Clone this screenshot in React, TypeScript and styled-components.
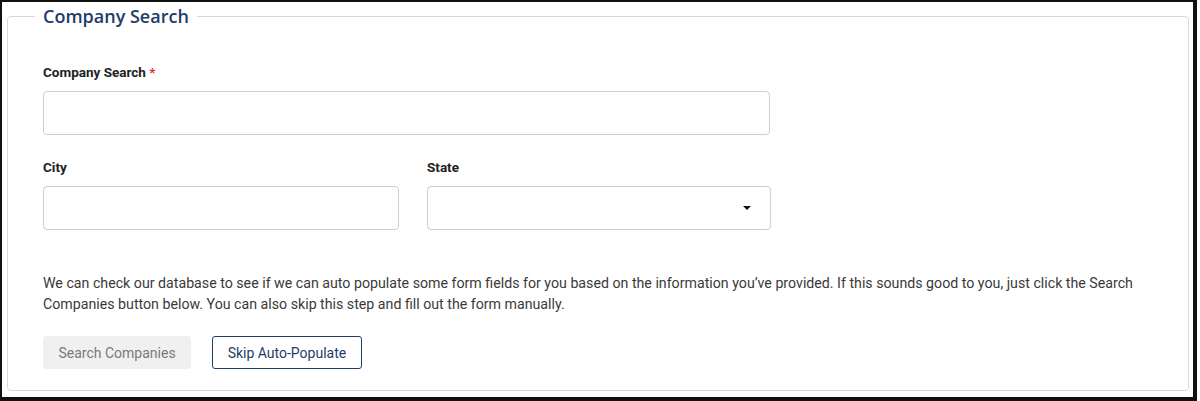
import styled, { createGlobalStyle } from "styled-components";

const navy = "#1e3c68";
const line = "#d3d9e0";

const GlobalStyle = createGlobalStyle`
  html, body {
    margin: 0;
    padding: 0;
    background: #fff;
  }
  body {
    font-family: Roboto, "Liberation Sans", sans-serif;
  }
`;

const Frame = styled.div`
  box-sizing: border-box;
  width: 1197px;
  height: 401px;
  border-style: solid;
  border-color: #111;
  border-width: 2px 4px 4px 2px;
  display: flex;
  flex-direction: column;
  background: #fff;
`;

const Fieldset = styled.fieldset`
  flex: 1;
  margin: 3px 4px 6px 5px;
  padding: 35px 35px 0 35px;
  border: 1px solid ${line};
  border-radius: 4px;
  min-width: 0;
`;

const Legend = styled.legend`
  margin-left: -8px;
  padding: 0 8px;
  font-family: "Open Sans", sans-serif;
  font-weight: 600;
  font-size: 18px;
  line-height: 22px;
  color: ${navy};
`;

const Field = styled.div`
  display: flex;
  flex-direction: column;
  gap: 9px;
`;

const Label = styled.label`
  font-size: 13.5px;
  font-weight: 700;
  line-height: 20px;
  color: #222;
`;

const Required = styled.span`
  color: #d0363a;
`;

const Input = styled.div<{ $width: number }>`
  box-sizing: border-box;
  width: ${(p) => p.$width}px;
  height: 44px;
  border: 1px solid #cfcfcf;
  border-radius: 4px;
  background: #fff;
`;

const Select = styled(Input)`
  display: flex;
  align-items: center;
  justify-content: flex-end;
  padding-right: 19px;
`;

const Caret = styled.span`
  width: 0;
  height: 0;
  border-left: 4px solid transparent;
  border-right: 4px solid transparent;
  border-top: 4px solid #111;
`;

const Row = styled.div`
  display: grid;
  grid-template-columns: 356px 343px;
  column-gap: 28px;
  margin-top: 22px;
`;

const Note = styled.p`
  margin: 43px 0 0;
  max-width: 1110px;
  font-size: 14.2px;
  line-height: 21px;
  color: #3a3a3a;
`;

const Actions = styled.div`
  display: flex;
  gap: 21px;
  margin-top: 21px;
`;

const Button = styled.button<{ $outline?: boolean }>`
  box-sizing: border-box;
  height: 33px;
  padding: 0 14.5px;
  font-family: Roboto, "Liberation Sans", sans-serif;
  font-size: 14px;
  border-radius: 3px;
  cursor: pointer;
  border: 1px solid ${(p) => (p.$outline ? navy : "#f0f0f0")};
  background: ${(p) => (p.$outline ? "#fff" : "#f0f0f0")};
  color: ${(p) => (p.$outline ? navy : "#7a7a7a")};
`;

export default function App() {
  return (
    <>
      <GlobalStyle />
      <Frame>
        <Fieldset>
          <Legend>Company Search</Legend>
          <Field>
            <Label>
              Company Search <Required>*</Required>
            </Label>
            <Input $width={727} />
          </Field>
          <Row>
            <Field>
              <Label>City</Label>
              <Input $width={356} />
            </Field>
            <Field>
              <Label>State</Label>
              <Select $width={344}>
                <Caret />
              </Select>
            </Field>
          </Row>
          <Note>
            We can check our database to see if we can auto populate some form
            fields for you based on the information you’ve provided. If this
            sounds good to you, just click the Search Companies button below.
            You can also skip this step and fill out the form manually.
          </Note>
          <Actions>
            <Button disabled>Search Companies</Button>
            <Button $outline>Skip Auto-Populate</Button>
          </Actions>
        </Fieldset>
      </Frame>
    </>
  );
}
